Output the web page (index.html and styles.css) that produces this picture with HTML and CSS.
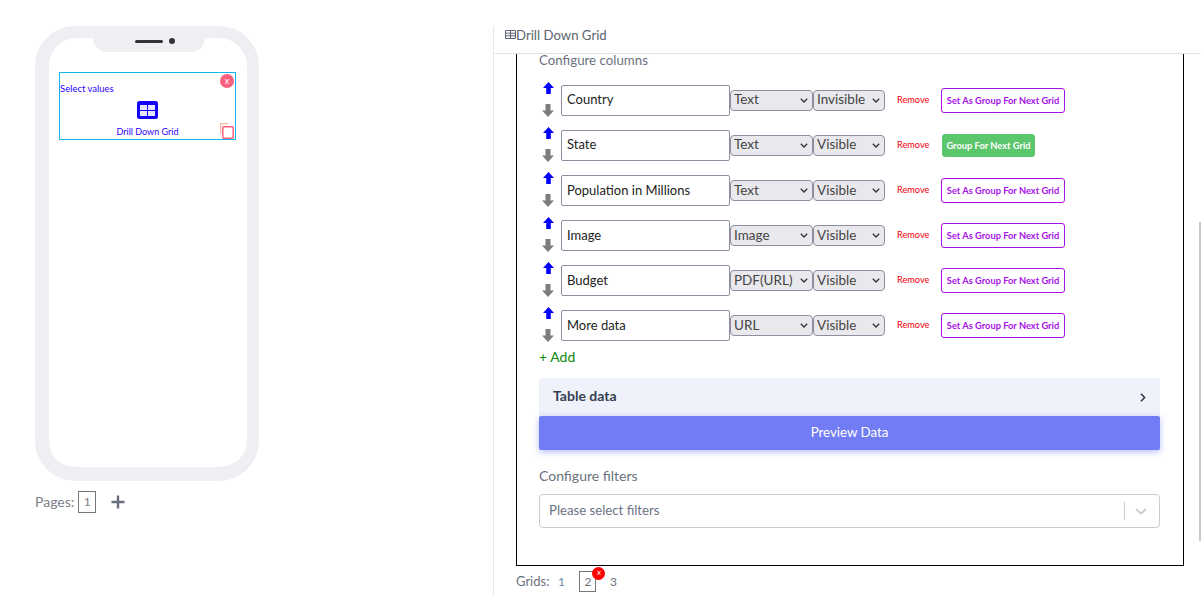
FILE: index.html
```html
<!DOCTYPE html>
<html lang="en">
<head>
    <meta charset="UTF-8">
    <meta name="viewport" content="width=device-width, initial-scale=1.0">
    <title>Drill Down Grid</title>
    <link rel="stylesheet" href="styles.css">
</head>
<body>
    <div class="page">
        <div class="left-side">
            <div class="phone">
                <div class="notch"><span class="speaker"></span><span class="camera"></span></div>
                <div class="widget">
                    <span class="widget-close">x</span>
                    <div class="widget-label">Select values</div>
                    <svg class="widget-icon" width="21" height="18" viewBox="0 0 21 18">
                        <rect x="0" y="0" width="21" height="18" rx="2.5" fill="#1400ff"/>
                        <rect x="3" y="4" width="7" height="5" fill="#e4e4ff"/>
                        <rect x="11" y="4" width="7" height="5" fill="#e4e4ff"/>
                        <rect x="3" y="10" width="7" height="5" fill="#e4e4ff"/>
                        <rect x="11" y="10" width="7" height="5" fill="#e4e4ff"/>
                    </svg>
                    <div class="widget-name">Drill Down Grid</div>
                    <svg class="widget-copy" width="14" height="16" viewBox="0 0 14 16">
                        <path d="M0.600 11V0.600H8" fill="none" stroke="#f6b9a0" stroke-width="1.200"/>
                        <rect x="2.800" y="3.800" width="10.400" height="11.400" rx="1" fill="#fff" stroke="#f9607f" stroke-width="1.500"/>
                    </svg>
                </div>
            </div>
            <div class="pages">
                <span>Pages:</span>
                <span class="page-num">1</span>
                <svg class="page-add" width="14" height="14" viewBox="0 0 14 14"><path d="M7 0.500V13.500M0.500 7H13.500" stroke="#666f7a" stroke-width="2.400"/></svg>
            </div>
        </div>

        <div class="right-side">
            <div class="panel-head">
                <svg width="11" height="9" viewBox="0 0 11 9"><path d="M0.500 0.500h10v8h-10zM0.500 3.200h10M0.500 5.800h10M5.500 0.500v8" fill="none" stroke="#5b6470" stroke-width="1"/></svg>
                <span>Drill Down Grid</span>
            </div>
            <div class="grid-box">
                <div class="section-title">Configure columns</div>

                <div class="col-row">
                    <div class="arrows">
                        <svg class="arrow-up" width="11" height="12" viewBox="0 0 12 13"><path d="M6 0L12 6.500H8.500V13H3.500V6.500H0z"/></svg>
                        <svg class="arrow-down" width="12" height="13" viewBox="0 0 12 13"><path d="M6 13L12 6.500H8.500V0H3.500V6.500H0z"/></svg>
                    </div>
                    <input class="col-name" type="text" value="Country">
                    <select class="col-type"><option>Text</option></select>
                    <select class="col-vis"><option>Invisible</option></select>
                    <span class="remove">Remove</span>
                    <span class="group-btn">Set As Group For Next Grid</span>
                </div>
                <div class="col-row">
                    <div class="arrows">
                        <svg class="arrow-up" width="11" height="12" viewBox="0 0 12 13"><path d="M6 0L12 6.500H8.500V13H3.500V6.500H0z"/></svg>
                        <svg class="arrow-down" width="12" height="13" viewBox="0 0 12 13"><path d="M6 13L12 6.500H8.500V0H3.500V6.500H0z"/></svg>
                    </div>
                    <input class="col-name" type="text" value="State">
                    <select class="col-type"><option>Text</option></select>
                    <select class="col-vis"><option>Visible</option></select>
                    <span class="remove">Remove</span>
                    <span class="group-btn active">Group For Next Grid</span>
                </div>
                <div class="col-row">
                    <div class="arrows">
                        <svg class="arrow-up" width="11" height="12" viewBox="0 0 12 13"><path d="M6 0L12 6.500H8.500V13H3.500V6.500H0z"/></svg>
                        <svg class="arrow-down" width="12" height="13" viewBox="0 0 12 13"><path d="M6 13L12 6.500H8.500V0H3.500V6.500H0z"/></svg>
                    </div>
                    <input class="col-name" type="text" value="Population in Millions">
                    <select class="col-type"><option>Text</option></select>
                    <select class="col-vis"><option>Visible</option></select>
                    <span class="remove">Remove</span>
                    <span class="group-btn">Set As Group For Next Grid</span>
                </div>
                <div class="col-row">
                    <div class="arrows">
                        <svg class="arrow-up" width="11" height="12" viewBox="0 0 12 13"><path d="M6 0L12 6.500H8.500V13H3.500V6.500H0z"/></svg>
                        <svg class="arrow-down" width="12" height="13" viewBox="0 0 12 13"><path d="M6 13L12 6.500H8.500V0H3.500V6.500H0z"/></svg>
                    </div>
                    <input class="col-name" type="text" value="Image">
                    <select class="col-type"><option>Image</option></select>
                    <select class="col-vis"><option>Visible</option></select>
                    <span class="remove">Remove</span>
                    <span class="group-btn">Set As Group For Next Grid</span>
                </div>
                <div class="col-row">
                    <div class="arrows">
                        <svg class="arrow-up" width="11" height="12" viewBox="0 0 12 13"><path d="M6 0L12 6.500H8.500V13H3.500V6.500H0z"/></svg>
                        <svg class="arrow-down" width="12" height="13" viewBox="0 0 12 13"><path d="M6 13L12 6.500H8.500V0H3.500V6.500H0z"/></svg>
                    </div>
                    <input class="col-name" type="text" value="Budget">
                    <select class="col-type"><option>PDF(URL)</option></select>
                    <select class="col-vis"><option>Visible</option></select>
                    <span class="remove">Remove</span>
                    <span class="group-btn">Set As Group For Next Grid</span>
                </div>
                <div class="col-row">
                    <div class="arrows">
                        <svg class="arrow-up" width="11" height="12" viewBox="0 0 12 13"><path d="M6 0L12 6.500H8.500V13H3.500V6.500H0z"/></svg>
                        <svg class="arrow-down" width="12" height="13" viewBox="0 0 12 13"><path d="M6 13L12 6.500H8.500V0H3.500V6.500H0z"/></svg>
                    </div>
                    <input class="col-name" type="text" value="More data">
                    <select class="col-type"><option>URL</option></select>
                    <select class="col-vis"><option>Visible</option></select>
                    <span class="remove">Remove</span>
                    <span class="group-btn">Set As Group For Next Grid</span>
                </div>

                <div class="add-link">+ Add</div>

                <div class="table-data">
                    <span>Table data</span>
                    <svg width="6" height="9" viewBox="0 0 6 9"><path d="M1 0.800L4.600 4.500L1 8.200" fill="none" stroke="#2b3445" stroke-width="1.500"/></svg>
                </div>
                <div class="preview-btn">Preview Data</div>

                <div class="filter-title">Configure filters</div>
                <div class="filter-select">
                    <span class="filter-text">Please select filters</span>
                    <span class="filter-sep"></span>
                    <svg class="filter-arrow" width="12" height="7" viewBox="0 0 12 7"><path d="M1 1L6 5.500L11 1" fill="none" stroke="#ccc" stroke-width="2"/></svg>
                </div>
            </div>
            <div class="grids">
                <span class="grids-label">Grids:</span>
                <span class="grid-num">1</span>
                <span class="grid-num current">2<span class="grid-close">x</span></span>
                <span class="grid-num plain">3</span>
            </div>
        </div>
    </div>
    <div class="scroll-thumb"></div>
</body>
</html>
```

FILE: styles.css
```css
html, body {
    margin: 0;
    padding: 0;
    height: 609px;
    overflow: hidden;
    background-color: #fff;
    font-family: Lato, "Noto Sans", sans-serif;
    color: #6b7280;
}

.page {
    display: flex;
    height: 609px;
}

.left-side {
    width: 493px;
    flex-shrink: 0;
    padding: 26px 0 0 35px;
    box-sizing: border-box;
}

.phone {
    width: 224px;
    height: 455px;
    box-sizing: border-box;
    border: solid #eeeff3;
    border-width: 12px 12px 14px 14px;
    border-radius: 40px;
    padding-top: 34px;
    position: relative;
}

.notch {
    position: absolute;
    top: -12px;
    left: 44px;
    width: 112px;
    height: 26px;
    box-sizing: border-box;
    padding: 4px 0 0 12px;
    background-color: #eeeff3;
    border-radius: 0 0 14px 14px;
    display: flex;
    justify-content: center;
    align-items: center;
    gap: 6px;
}

.speaker {
    width: 28px;
    height: 3px;
    background-color: #333;
    border-radius: 2px;
}

.camera {
    width: 6px;
    height: 6px;
    background-color: #333;
    border-radius: 50%;
}

.widget {
    width: 177px;
    height: 68px;
    margin-left: 10px;
    box-sizing: border-box;
    border: 1px solid #12b5ea;
    position: relative;
    color: #2a00ff;
    font-size: 9.500px;
    display: flex;
    flex-direction: column;
    align-items: center;
}

.widget-label {
    align-self: flex-start;
    margin: 9px 0 0 0;
    line-height: 13px;
}

.widget-icon {
    margin-top: 6px;
}

.widget-name {
    margin-top: 6px;
    line-height: 13px;
    font-size: 9px;
}

.widget-close {
    position: absolute;
    top: 1px;
    right: 1px;
    width: 14px;
    height: 14px;
    border-radius: 50%;
    background-color: #f9607f;
    color: #fff;
    font-size: 9px;
    line-height: 13px;
    text-align: center;
}

.widget-copy {
    position: absolute;
    right: 1px;
    bottom: 0;
}

.pages {
    display: flex;
    align-items: center;
    margin-top: 10px;
    font-size: 14px;
    color: #7b8087;
    line-height: 18px;
}

.page-num {
    width: 18px;
    height: 22px;
    line-height: 20px;
    box-sizing: border-box;
    border: 1px solid #777;
    text-align: center;
    margin-left: 4px;
    font-size: 12px;
}

.page-add {
    margin-left: 15px;
}

.right-side {
    flex: 1;
    border-left: 1px solid #e8e8e8;
    margin-top: 26px;
    height: 570px;
    position: relative;
}

.panel-head {
    height: 27px;
    border-bottom: 1px solid #e3e3e3;
    display: flex;
    align-items: flex-start;
    padding-left: 11px;
    font-size: 13.200px;
    line-height: 18px;
    color: #5b6470;
}

.panel-head svg {
    margin-top: 4px;
}

.grid-box {
    margin-left: 22px;
    width: 668px;
    height: 512px;
    box-sizing: border-box;
    border: solid #000;
    border-width: 0 1px 1px 1px;
    padding: 0 23px 0 22px;
}

.section-title {
    font-size: 13.300px;
    line-height: 12px;
    margin-bottom: 19px;
    color: #6b7280;
}

.col-row {
    display: flex;
    align-items: center;
    height: 31px;
    margin-bottom: 14px;
}

.arrows {
    width: 18px;
    margin-top: -2px;
    margin-right: 4px;
    padding-left: 3px;
    box-sizing: border-box;
    display: flex;
    flex-direction: column;
    gap: 10px;
}

.arrows svg {
    display: block;
}

.arrow-up {
    fill: #0000ff;
    margin-left: 0.500px;
}

.arrow-down {
    fill: #7d7d7d;
}

.col-name {
    width: 169px;
    height: 31px;
    box-sizing: border-box;
    border: 1px solid #8f8d9f;
    border-radius: 2px;
    padding: 0 5px 3px;
    margin: 0;
    font-family: Lato, "Noto Sans", sans-serif;
    font-size: 13px;
    color: #222;
    background-color: #fff;
}

.col-type, .col-vis {
    height: 21px;
    box-sizing: border-box;
    margin: 0;
    padding: 0 0 3px 3px;
    border: 1px solid #8f8d9f;
    border-radius: 4px;
    appearance: none;
    background-color: #e9e9ed;
    background-image: url("data:image/svg+xml,%3Csvg xmlns='http://www.w3.org/2000/svg' width='8' height='5' viewBox='0 0 8 5'%3E%3Cpath d='M0.800 0.800L4 4L7.200 0.800' fill='none' stroke='%23333' stroke-width='1.300'/%3E%3C/svg%3E");
    background-repeat: no-repeat;
    background-position: right 4px center;
    font-family: Lato, "Noto Sans", sans-serif;
    font-size: 13.500px;
    color: #444;
}

/* rows from the third on sit a pixel lower in their boxes */
.col-row:nth-child(n+4) .col-name {
    padding-bottom: 1px;
}

.col-row:nth-child(n+4) .col-type,
.col-row:nth-child(n+4) .col-vis {
    padding-bottom: 1px;
}

.col-type {
    width: 83px;
}

.col-vis {
    width: 72px;
}

.remove {
    color: #f5000a;
    font-size: 9.200px;
    width: 44px;
    margin: 0 0 2px 12px;
}

.group-btn {
    height: 25px;
    line-height: 23px;
    box-sizing: border-box;
    border: 1px solid #a711e8;
    border-radius: 3px;
    color: #a711e8;
    font-size: 9.300px;
    font-weight: 700;
    white-space: nowrap;
    width: 124px;
    text-align: center;
}

.group-btn.active {
    width: 93px;
    height: 23px;
    line-height: 22px;
    background-color: #5cc66c;
    border-color: #5cc66c;
    color: #fff;
    margin-left: 1px;
}

.add-link {
    color: #0a8a0a;
    font-size: 14px;
    line-height: 18px;
    margin-top: -7px;
    margin-bottom: 12px;
}

.table-data {
    height: 38px;
    box-sizing: border-box;
    background-color: #eff2fa;
    border-radius: 3px 3px 0 0;
    display: flex;
    justify-content: space-between;
    align-items: center;
    padding: 0 14px 4px;
    font-size: 14px;
    font-weight: 700;
    color: #344050;
}

.table-data svg {
    margin-top: 4px;
}

.preview-btn {
    height: 34px;
    line-height: 32px;
    background-color: #727cf5;
    color: #fff;
    text-align: center;
    font-size: 13.300px;
    border-radius: 2px;
    box-shadow: 0 2px 6px rgba(114, 124, 245, 0.500);
}

.filter-title {
    margin-top: 17px;
    font-size: 14px;
    line-height: 18px;
    margin-bottom: 9px;
}

.filter-select {
    height: 34px;
    box-sizing: border-box;
    border: 1px solid #ccc;
    border-radius: 4px;
    display: flex;
    align-items: center;
    padding: 0 12px 0 9px;
    font-size: 13.200px;
    color: #6b7280;
}

.filter-text {
    flex: 1;
    margin-bottom: 2px;
}

.filter-sep {
    width: 1px;
    height: 18px;
    background-color: #ccc;
    margin-right: 10px;
}

.grids {
    display: flex;
    align-items: center;
    margin: 5px 0 0 22px;
    font-size: 13px;
    line-height: 21px;
    color: #6b7280;
}

.grids-label {
    margin-right: 4px;
}

.grid-num {
    width: 16px;
    height: 21px;
    text-align: center;
    color: #6c8aa8;
    margin-right: 10px;
    font-size: 12px;
    position: relative;
}

.grid-num.current {
    width: 17px;
    box-sizing: border-box;
    border: 1px solid #777;
    line-height: 20px;
    margin-right: 9px;
    color: #6b7280;
}

.grid-num.plain {
    color: #6b7280;
}

.grid-close {
    position: absolute;
    top: -5px;
    right: -10px;
    width: 13px;
    height: 13px;
    line-height: 11px;
    border-radius: 50%;
    background-color: #f00;
    color: #fff;
    font-size: 8px;
}

.scroll-thumb {
    position: fixed;
    top: 222px;
    right: 0;
    width: 2px;
    height: 319px;
    background-color: #c8c8c8;
}
```
